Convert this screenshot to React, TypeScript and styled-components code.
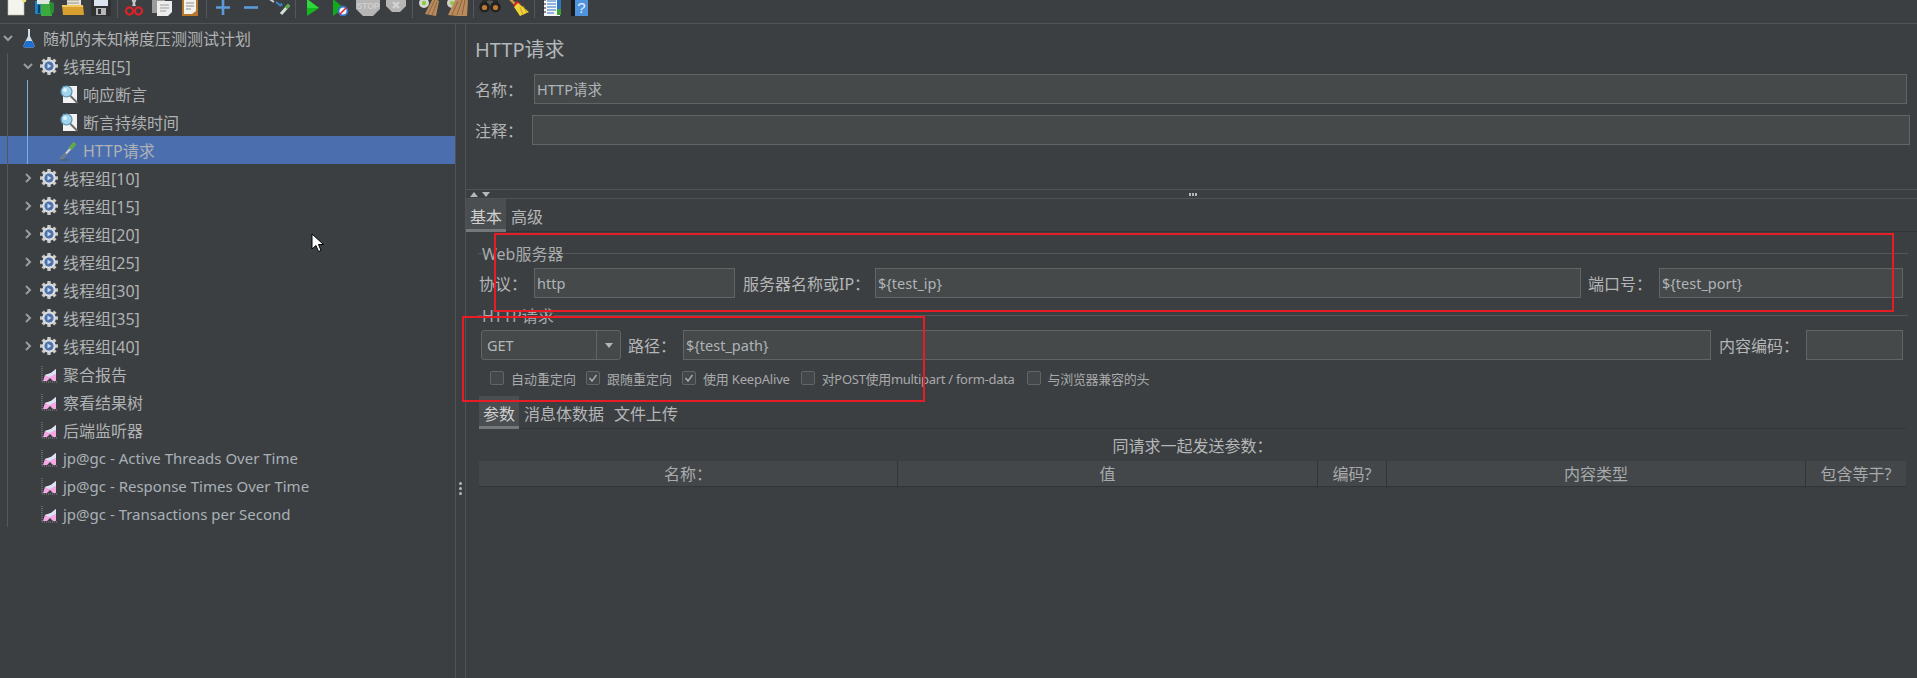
import React from 'react'
import styled, { createGlobalStyle } from 'styled-components'

const cjk = '"Noto Sans", "Noto Sans CJK SC", sans-serif'

const Global = createGlobalStyle`
  html, body {
    margin: 0;
    background: #3c3f41;
  }
  * {
    box-sizing: border-box;
  }
`

const Page = styled.div`
  position: relative;
  width: 1917px;
  height: 678px;
  overflow: hidden;
  background: #3c3f41;
  color: #b4b6b8;
  font-family: ${cjk};
  font-size: 16px;
`

/* toolbar */

const Toolbar = styled.div`
  display: flex;
  align-items: flex-end;
  height: 24px;
  padding: 0 0 7px 3px;
  overflow: hidden;
  border-bottom: 1px solid #515456;
`

const ToolButton = styled.div`
  width: 28px;
  height: 24px;
  flex: none;
  display: flex;
  justify-content: center;
`

const ToolSep = styled.div`
  width: 1px;
  height: 22px;
  flex: none;
  margin: 0 2px 0 2px;
  margin-bottom: -2px;
  background: #55585a;
`

const Ico = ({ children }: { children: React.ReactNode }) => (
  <ToolButton>
    <svg width="24" height="24" viewBox="0 0 24 24">
      {children}
    </svg>
  </ToolButton>
)

const toolGroups: React.ReactNode[][] = [
  [
    <>
      <rect x="3" y="0" width="16" height="23" fill="#f4f4ee" stroke="#b8b8b0" strokeWidth="0.6" />
      <circle cx="19" cy="8" r="2.4" fill="#f6e27a" />
    </>,
    <>
      <rect x="2" y="9" width="8" height="13" fill="#1c7fc2" />
      <rect x="8" y="11" width="11" height="13" fill="#3eaa3e" />
      <rect x="4" y="6" width="13" height="6" fill="#dfe8e0" />
      <rect x="5" y="13" width="2" height="8" fill="#0c3f68" />
      <path d="M16 9l5 2v9l-3 3z" fill="#2a8c30" />
    </>,
    <>
      <rect x="6" y="5" width="14" height="12" fill="#e8e4d8" />
      <path d="M6 8h12M6 11h12" stroke="#9a9488" />
      <path d="M1 13h21l1 10H2z" fill="#d9a030" />
      <path d="M1 13h21v2H1z" fill="#f0c864" />
    </>,
    <>
      <rect x="2" y="3" width="20" height="21" rx="1" fill="#2f3133" />
      <rect x="5" y="5" width="14" height="9" fill="#dbe3ee" />
      <rect x="7" y="16" width="10" height="7" fill="#b7b7b7" />
      <rect x="9" y="17" width="3" height="5" fill="#333" />
    </>,
  ],
  [
    <>
      <path d="M8 1l5 13M16 1l-5 13" stroke="#c8c8c8" strokeWidth="2" />
      <circle cx="7.5" cy="19" r="3.6" fill="none" stroke="#d8232a" strokeWidth="2.2" />
      <circle cx="16.5" cy="19" r="3.6" fill="none" stroke="#d8232a" strokeWidth="2.2" />
    </>,
    <>
      <rect x="2" y="6" width="13" height="15" fill="#9b9b9b" />
      <path d="M7 9h15v11l-4 4H7z" fill="#ececec" />
      <path d="M10 13h9M10 16h9M10 19h6" stroke="#9c9c9c" />
    </>,
    <>
      <rect x="4" y="2" width="16" height="22" fill="#b9772c" />
      <path d="M6 7h12v12l-4 3H6z" fill="#f2f2ee" />
      <path d="M8 11h8M8 14h8M8 17h5" stroke="#8e8e8e" />
    </>,
  ],
  [
    <path d="M12 8v15M5 15.5h14" stroke="#5d9bd8" strokeWidth="2.6" />,
    <path d="M5 15.5h14" stroke="#5d9bd8" strokeWidth="2.6" />,
    <>
      <path d="M1 6l6 4" stroke="#c9c9c9" strokeWidth="2" />
      <path d="M9 10l5 4" stroke="#3d82c8" strokeWidth="2" />
      <path d="M16 14l-4-.5 2.500-3z" fill="#3d82c8" />
      <path d="M14 22l8-9" stroke="#d8e0d8" strokeWidth="3" />
      <path d="M19 16l3-3" stroke="#55a84a" strokeWidth="3.4" />
    </>,
  ],
  [
    <>
      <path d="M7 7l12 9-12 8z" fill="#14b81e" />
      <path d="M7 7l12 9H7z" fill="#2dd63a" />
    </>,
    <>
      <path d="M5 7l11 9-11 8z" fill="#14a81e" />
      <circle cx="15" cy="19" r="4.500" fill="#eef3fa" stroke="#2f74c4" strokeWidth="1.800" />
      <path d="M11.500 22.500l7-7" stroke="#d8232a" strokeWidth="1.400" />
    </>,
    <>
      <path d="M7 -1h10l7 7v10l-7 7H7l-7-7V6z" fill="#b5b5b5" transform="translate(0 1)" />
      <text x="12" y="17" textAnchor="middle" fontSize="8.500" fontWeight="700" fill="#cfcfcf" fontFamily="Liberation Sans, sans-serif">STOP</text>
    </>,
    <>
      <path d="M8 5h8l6 6v6l-6 6H8l-6-6v-6z" fill="#b5b5b5" transform="translate(0 -3)" />
      <path d="M9 10l6 6M15 10l-6 6" stroke="#d4d4d4" strokeWidth="2.400" />
    </>,
  ],
  [
    <>
      <circle cx="7" cy="11" r="5" fill="#d8d8d2" />
      <circle cx="7" cy="11" r="2.200" fill="#8ecb3c" />
      <path d="M8 22l8-16 6 3-3 15z" fill="#b98a5c" />
      <path d="M11 22l7-14M15 23l5-13" stroke="#8a6540" />
    </>,
    <>
      <circle cx="7" cy="11" r="5" fill="#d0d0ca" />
      <circle cx="7" cy="11" r="2" fill="#8ecb3c" />
      <path d="M3 23l8-17 4 2 3-3 5 2-1 18z" fill="#b98a5c" />
      <path d="M7 23l6-14M12 23l5-15M17 23l3-15" stroke="#8a6540" />
    </>,
  ],
  [
    <>
      <rect x="4" y="6" width="6" height="5" fill="#2c2c2c" />
      <rect x="14" y="6" width="6" height="5" fill="#2c2c2c" />
      <rect x="9" y="9" width="6" height="5" fill="#555" />
      <circle cx="6.500" cy="15" r="5.300" fill="#222" />
      <circle cx="17.500" cy="15" r="5.300" fill="#222" />
      <circle cx="6.500" cy="15.500" r="2.600" fill="#c07a30" />
      <circle cx="17.500" cy="15.500" r="2.600" fill="#c07a30" />
    </>,
    <>
      <path d="M3 6l6 6" stroke="#c99a3c" strokeWidth="2.600" />
      <path d="M7 13l4-4 4 3-3 4z" fill="#d8232a" />
      <path d="M12 11l11 9-9 4-6-9z" fill="#f1d23b" />
      <path d="M14 15l3 8M17 14l4 7" stroke="#c2a41e" />
    </>,
  ],
  [
    <>
      <rect x="5" y="4" width="16" height="20" fill="#f6f6f6" />
      <rect x="18" y="8" width="4" height="9" fill="#2f74c4" />
      <rect x="18" y="17" width="4" height="6" fill="#3ea03a" />
      <path d="M8 9h9M8 12h9M8 15h9M8 18h9M8 21h7" stroke="#2f74c4" strokeWidth="1.200" />
      <path d="M4 8h3M4 12h3M4 16h3M4 20h3" stroke="#222" strokeWidth="1.200" />
    </>,
    <>
      <rect x="4" y="3" width="4" height="21" fill="#17191a" />
      <rect x="8" y="3" width="13" height="21" fill="#4f92de" />
      <text x="14.500" y="21" textAnchor="middle" fontSize="15" fill="#e6f0fb" fontFamily="Liberation Sans, sans-serif">?</text>
    </>,
  ],
]

/* tree */

const Main = styled.div`
  display: flex;
  height: 654px;
`

const TreePane = styled.div`
  position: relative;
  width: 455px;
  flex: none;
`

const TreeGuide = styled.div<{ $x: number; $top: number; $height: number; $color: string }>`
  position: absolute;
  left: ${(p) => p.$x}px;
  top: ${(p) => p.$top}px;
  width: 1px;
  height: ${(p) => p.$height}px;
  background: ${(p) => p.$color};
`

const TreeRow = styled.div<{ $indent: number; $selected?: boolean }>`
  display: flex;
  align-items: center;
  height: 28px;
  padding-left: ${(p) => p.$indent}px;
  background: ${(p) => (p.$selected ? '#4b6eaf' : 'transparent')};
  white-space: nowrap;
`

const Caret = styled.svg`
  width: 14px;
  height: 14px;
  flex: none;
`

const NodeIcon = styled.svg`
  width: 28px;
  height: 22px;
  flex: none;
`

const NodeLabel = styled.span<{ $latin?: boolean }>`
  font-size: ${(p) => (p.$latin ? '15px' : '16px')};
  color: ${(p) => (p.$latin ? '#a9b1b8' : '#b0b2b4')};
`

const CaretIcon = ({ open }: { open: boolean }) => (
  <Caret viewBox="0 0 14 14">
    <path
      d={open ? 'M3 5l4 4 4-4' : 'M5 3l4 4-4 4'}
      fill="none"
      stroke="#9a9c9e"
      strokeWidth="2"
    />
  </Caret>
)

const Flask = () => (
  <NodeIcon viewBox="0 0 28 22">
    <path d="M13 2h2v7l4.500 9.500q.5 2-1.500 2h-8q-2 0-1.500-2L13 9z" fill="#d3dbe4" />
    <path d="M11 14h6l2.500 4.500q.5 2-1.500 2h-8q-2 0-1.500-2z" fill="#1f6fd0" />
  </NodeIcon>
)

const Gear = () => (
  <NodeIcon viewBox="0 0 28 22">
    <g transform="translate(14 11)">
      {[0, 45, 90, 135].map((a) => (
        <rect key={a} x="-1.700" y="-9" width="3.400" height="18" fill="#c9c9c9" transform={`rotate(${a})`} />
      ))}
      <circle r="6.800" fill="#dcdcdc" />
      <circle r="4.600" fill="#4a72ae" />
      <path d="M-1.500 -2.400L2.400 0L-1.500 2.400z" fill="#c9d8ee" />
    </g>
  </NodeIcon>
)

const Magnifier = () => (
  <NodeIcon viewBox="0 0 28 22">
    <rect x="8" y="3" width="14" height="17" fill="#f2f2f2" />
    <circle cx="11.500" cy="8.500" r="5.500" fill="#9fd6ee" stroke="#5f8fb0" strokeWidth="1.200" />
    <circle cx="10" cy="7" r="2" fill="#dff3fb" />
    <path d="M15.500 13l7 7" stroke="#6c6c6c" strokeWidth="2" />
  </NodeIcon>
)

const Dropper = () => (
  <NodeIcon viewBox="0 0 28 22">
    <path d="M6 20l10-11" stroke="#cfd3d6" strokeWidth="2" />
    <path d="M6 20l5-5.500" stroke="#6f7476" strokeWidth="2" />
    <path d="M15 10l5-6" stroke="#62a84a" strokeWidth="4" />
    <path d="M5 21h10" stroke="#55585a" />
  </NodeIcon>
)

const Listener = () => (
  <NodeIcon viewBox="0 0 28 22">
    <path d="M7 3v16h15" fill="none" stroke="#8a8c8e" strokeDasharray="1 1" />
    <path d="M8 18l2-6 6-2 5-4v12h-3l-3-3-3 3z" fill="#f4a8e4" />
    <path d="M10 12l6-2 5-4v5l-3 1-3 2-3-1z" fill="#dbe6f5" />
  </NodeIcon>
)

const groups = ['[10]', '[15]', '[20]', '[25]', '[30]', '[35]', '[40]']
const listeners = ['聚合报告', '察看结果树', '后端监听器']
const plots = ['jp@gc - Active Threads Over Time', 'jp@gc - Response Times Over Time', 'jp@gc - Transactions per Second']

const Tree = () => (
  <TreePane>
    <TreeGuide $x={7} $top={29} $height={474} $color="#55585b" />
    <TreeRow $indent={1}>
      <CaretIcon open />
      <Flask />
      <NodeLabel>随机的未知梯度压测测试计划</NodeLabel>
    </TreeRow>
    <TreeRow $indent={21}>
      <CaretIcon open />
      <Gear />
      <NodeLabel>线程组[5]</NodeLabel>
    </TreeRow>
    <TreeRow $indent={55}>
      <Magnifier />
      <NodeLabel>响应断言</NodeLabel>
    </TreeRow>
    <TreeRow $indent={55}>
      <Magnifier />
      <NodeLabel>断言持续时间</NodeLabel>
    </TreeRow>
    <TreeRow $indent={55} $selected>
      <Dropper />
      <NodeLabel>HTTP请求</NodeLabel>
    </TreeRow>
    <TreeGuide $x={27} $top={56} $height={84} $color="#76b0e4" />
    {groups.map((g) => (
      <TreeRow key={g} $indent={21}>
        <CaretIcon open={false} />
        <Gear />
        <NodeLabel>线程组{g}</NodeLabel>
      </TreeRow>
    ))}
    {listeners.map((l) => (
      <TreeRow key={l} $indent={35}>
        <Listener />
        <NodeLabel>{l}</NodeLabel>
      </TreeRow>
    ))}
    {plots.map((l) => (
      <TreeRow key={l} $indent={35}>
        <Listener />
        <NodeLabel $latin>{l}</NodeLabel>
      </TreeRow>
    ))}
  </TreePane>
)

const Splitter = styled.div`
  width: 11px;
  flex: none;
  display: flex;
  flex-direction: column;
  align-items: center;
  justify-content: flex-start;
  gap: 2px;
  padding-top: 458px;
  border-left: 1px solid #505356;
  border-right: 1px solid #505356;
`

const GripDot = styled.div`
  width: 3px;
  height: 3px;
  border-radius: 50%;
  background: #b4b6b8;
`

/* right side */

const Editor = styled.div`
  flex: 1;
  min-width: 0;
`

const TopBlock = styled.div`
  height: 166px;
  padding: 14px 0 0 9px;
  border-bottom: 1px solid #505356;
`

const Title = styled.div`
  font-size: 20px;
  line-height: 24px;
  color: #b2b7bc;
`

const NameRow = styled.div<{ $label: number; $right: number; $top: number }>`
  display: grid;
  grid-template-columns: ${(p) => p.$label}px 1fr;
  align-items: center;
  margin: ${(p) => p.$top}px ${(p) => p.$right}px 0 0;
`

const TextField = styled.div<{ $width?: number }>`
  ${(p) => (p.$width ? `width: ${p.$width}px; flex: none;` : 'flex: 1; min-width: 0;')}
  height: 30px;
  padding: 0 2px;
  background: #45494a;
  border: 1px solid #646464;
  font-size: 14.500px;
  line-height: 29px;
  color: #aeb4b8;
  white-space: nowrap;
`

const SplitBar = styled.div`
  display: grid;
  grid-template-columns: 1fr auto 1fr;
  align-items: center;
  height: 9px;
  padding-left: 3px;
  border-bottom: 1px solid #505356;
`

const SplitArrows = styled.svg`
  width: 30px;
  height: 7px;
`

const SplitDots = styled.div`
  display: flex;
  gap: 1px;
`

const SplitDot = styled.div`
  width: 2px;
  height: 3px;
  background: #b4b6b8;
`

const TabBar = styled.div<{ $inset: number; $right: number; $top: number }>`
  display: flex;
  height: 33px;
  margin: ${(p) => p.$top}px ${(p) => p.$right}px 0 ${(p) => p.$inset}px;
  border-bottom: 1px solid #323537;
`

const Tab = styled.div<{ $active?: boolean }>`
  height: 33px;
  padding: 0 4px;
  margin-right: ${(p) => (p.$active ? '1px' : '2px')};
  line-height: 36px;
  white-space: nowrap;
  color: ${(p) => (p.$active ? '#d0d0d0' : '#b4b6b8')};
  background: ${(p) => (p.$active ? '#4a4e50' : 'transparent')};
  border-bottom: 3px solid ${(p) => (p.$active ? '#74787b' : 'transparent')};
`

const Section = styled.div`
  padding: 0 9px 0 12px;
`

const Legend = styled.div<{ $top: number }>`
  display: flex;
  align-items: center;
  height: 20px;
  margin-top: ${(p) => p.$top}px;
  color: #a8aaac;
  &::before {
    content: '';
    width: 4px;
    height: 1px;
    background: #55585b;
  }
  &::after {
    content: '';
    flex: 1;
    height: 1px;
    background: #55585b;
  }
`

const FormRow = styled.div<{ $left: number }>`
  display: flex;
  align-items: center;
  margin: 5px 5px 0 0;
  padding-left: ${(p) => p.$left}px;
`

const FormLabel = styled.div<{ $width: number; $pad?: number }>`
  width: ${(p) => p.$width}px;
  flex: none;
  padding-left: ${(p) => p.$pad || 0}px;
  white-space: nowrap;
`

const Combo = styled.div`
  display: grid;
  grid-template-columns: 1fr 24px;
  width: 140px;
  height: 30px;
  flex: none;
  background: #45494a;
  border: 1px solid #646464;
  border-radius: 3px;
  font-size: 14.500px;
  line-height: 29px;
`

const ComboValue = styled.div`
  padding-left: 5px;
`

const ComboArrow = styled.div`
  display: flex;
  align-items: center;
  justify-content: center;
  border-left: 1px solid #646464;
  &::after {
    content: '';
    border-left: 4px solid transparent;
    border-right: 4px solid transparent;
    border-top: 5px solid #b4b6b8;
  }
`

const OptionRow = styled.div`
  display: flex;
  align-items: center;
  height: 18px;
  margin-top: 9px;
  padding-left: 24px;
  font-size: 13px;
  color: #a8aaac;
`

const Option = styled.label<{ $gap: number; $track: number }>`
  display: flex;
  align-items: center;
  gap: 7px;
  margin-right: ${(p) => p.$gap}px;
  letter-spacing: ${(p) => p.$track}px;
  white-space: nowrap;
`

const Check = styled.span`
  display: flex;
  align-items: center;
  justify-content: center;
  width: 14px;
  height: 14px;
  flex: none;
  background: #43474a;
  border: 1px solid #626566;
  border-radius: 2px;
`

const Caption = styled.div`
  height: 32px;
  margin: 0 11px 0 13px;
  text-align: center;
  line-height: 35px;
`

const ParamHead = styled.div`
  display: grid;
  grid-template-columns: 419px 420px 69px 419px 100px;
  height: 26px;
  margin: 0 11px 0 13px;
  background: #43474a;
  border-bottom: 1px solid #323537;
`

const HeadCell = styled.div`
  text-align: center;
  line-height: 27px;
  color: #a8aaac;
  border-right: 1px solid #323537;
  white-space: nowrap;
  &:last-child {
    border-right: 0;
  }
`

/* screenshot markup lying over the page */

const RedBox = styled.div<{ $x: number; $y: number; $w: number; $h: number }>`
  position: absolute;
  left: ${(p) => p.$x}px;
  top: ${(p) => p.$y}px;
  width: ${(p) => p.$w}px;
  height: ${(p) => p.$h}px;
  border: 2px solid #e81c25;
  pointer-events: none;
`

const Cursor = styled.svg`
  position: absolute;
  left: 311px;
  top: 233px;
  width: 14px;
  height: 20px;
`

const tick = (
  <svg width="10" height="10" viewBox="0 0 10 10">
    <path d="M1.500 5l2.500 3 4.500-6" fill="none" stroke="#a8aaac" strokeWidth="1.400" />
  </svg>
)

const options = [
  { label: '自动重定向', checked: false, gap: 10, track: 0 },
  { label: '跟随重定向', checked: true, gap: 10, track: 0 },
  { label: '使用 KeepAlive', checked: true, gap: 11, track: -0.2 },
  { label: '对POST使用multipart / form-data', checked: false, gap: 12, track: -0.3 },
  { label: '与浏览器兼容的头', checked: false, gap: 0, track: -0.3 },
]

const columns = ['名称：', '值', '编码?', '内容类型', '包含等于?']

function App() {
  return (
    <Page>
      <Global />
      <Toolbar>
        {toolGroups.map((group, i) => (
          <React.Fragment key={i}>
            {i > 0 && <ToolSep />}
            {group.map((icon, j) => (
              <Ico key={j}>{icon}</Ico>
            ))}
          </React.Fragment>
        ))}
      </Toolbar>
      <Main>
        <Tree />
        <Splitter>
          <GripDot />
          <GripDot />
          <GripDot />
        </Splitter>
        <Editor>
          <TopBlock>
            <Title>HTTP请求</Title>
            <NameRow $label={59} $right={10} $top={12}>
              <span>名称：</span>
              <TextField>HTTP请求</TextField>
            </NameRow>
            <NameRow $label={57} $right={7} $top={11}>
              <span>注释：</span>
              <TextField />
            </NameRow>
          </TopBlock>
          <SplitBar>
            <SplitArrows viewBox="0 0 30 7">
              <path d="M1 6l4-5 4 5z" fill="#b4b6b8" />
              <path d="M13 1l4 5 4-5z" fill="#b4b6b8" />
            </SplitArrows>
            <SplitDots>
              <SplitDot />
              <SplitDot />
              <SplitDot />
            </SplitDots>
          </SplitBar>
          <TabBar $inset={0} $right={0} $top={0}>
            <Tab $active>基本</Tab>
            <Tab>高级</Tab>
          </TabBar>
          <Section>
            <Legend $top={11}>Web服务器</Legend>
            <FormRow $left={1}>
              <FormLabel $width={55}>协议：</FormLabel>
              <TextField $width={201}>http</TextField>
              <FormLabel $width={140} $pad={8}>
                服务器名称或IP：
              </FormLabel>
              <TextField>{'${test_ip}'}</TextField>
              <FormLabel $width={78} $pad={7}>
                端口号：
              </FormLabel>
              <TextField $width={244}>{'${test_port}'}</TextField>
            </FormRow>
            <Legend $top={7}>HTTP请求</Legend>
            <FormRow $left={3}>
              <Combo>
                <ComboValue>GET</ComboValue>
                <ComboArrow />
              </Combo>
              <FormLabel $width={62} $pad={7}>
                路径：
              </FormLabel>
              <TextField>{'${test_path}'}</TextField>
              <FormLabel $width={95} $pad={8}>
                内容编码：
              </FormLabel>
              <TextField $width={97} />
            </FormRow>
          </Section>
          <OptionRow>
            {options.map((o) => (
              <Option key={o.label} $gap={o.gap} $track={o.track}>
                <Check>{o.checked && tick}</Check>
                {o.label}
              </Option>
            ))}
          </OptionRow>
          <TabBar $inset={13} $right={11} $top={9}>
            <Tab $active>参数</Tab>
            <Tab>消息体数据</Tab>
            <Tab>文件上传</Tab>
          </TabBar>
          <Caption>同请求一起发送参数：</Caption>
          <ParamHead>
            {columns.map((c) => (
              <HeadCell key={c}>{c}</HeadCell>
            ))}
          </ParamHead>
        </Editor>
      </Main>
      <RedBox $x={494} $y={233} $w={1400} $h={79} />
      <RedBox $x={462} $y={316} $w={463} $h={86} />
      <Cursor viewBox="0 0 14 20">
        <path d="M1 1v15l4-3.500 2.500 6 2.500-1-2.500-6h5z" fill="#fff" stroke="#000" />
      </Cursor>
    </Page>
  )
}

export default App
